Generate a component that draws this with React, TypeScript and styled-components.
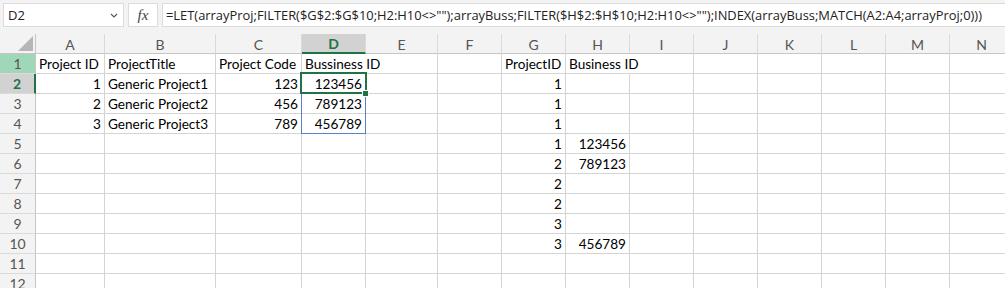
import styled, { createGlobalStyle } from "styled-components";

const GlobalStyle = createGlobalStyle`
  html, body {
    margin: 0;
    padding: 0;
    background: #ffffff;
    overflow: hidden;
  }
`;

const COLS = ["A", "B", "C", "D", "E", "F", "G", "H", "I", "J", "K", "L", "M", "N"];
const WIDTHS = [69, 111, 86, 64, 72, 64, 64, 64, 64, 64, 64, 64, 64, 64];

type Val = string | number | null;

// A..N per row, rows 1..13
const ROWS: Val[][] = [
  ["Project ID", "ProjectTitle", "Project Code", "Bussiness ID", null, null, "ProjectID", "Business ID"],
  [1, "Generic Project1", 123, 123456, null, null, 1],
  [2, "Generic Project2", 456, 789123, null, null, 1],
  [3, "Generic Project3", 789, 456789, null, null, 1],
  [null, null, null, null, null, null, 1, 123456],
  [null, null, null, null, null, null, 2, 789123],
  [null, null, null, null, null, null, 2],
  [null, null, null, null, null, null, 2],
  [null, null, null, null, null, null, 3],
  [null, null, null, null, null, null, 3, 456789],
  [],
  [],
  [],
];

const FORMULA =
  '=LET(arrayProj;FILTER($G$2:$G$10;H2:H10<>"");arrayBuss;FILTER($H$2:$H$10;H2:H10<>"");INDEX(arrayBuss;MATCH(A2:A4;arrayProj;0)))';

const Sheet = styled.div`
  width: 1005px;
  height: 288px;
  overflow: hidden;
  background: #ffffff;
  font-family: Lato, "Open Sans", sans-serif;
`;

const FormulaBar = styled.div`
  height: 34px;
  box-sizing: border-box;
  display: flex;
  align-items: flex-start;
  gap: 4px;
  padding: 3px 0 0 3px;
  background: #f3f3f3;
`;

const NameBox = styled.div`
  width: 121px;
  height: 24px;
  box-sizing: border-box;
  display: flex;
  align-items: center;
  justify-content: space-between;
  padding: 0 5px 0 4px;
  background: #ffffff;
  border: 1px solid #dcdcdc;
  font-family: "Open Sans", sans-serif;
  font-size: 13px;
  color: #222222;
`;

const FxBox = styled.div`
  width: 30px;
  height: 24px;
  box-sizing: border-box;
  display: flex;
  align-items: center;
  justify-content: center;
  background: #ffffff;
  border: 1px solid #dcdcdc;
  font-family: "Liberation Serif", serif;
  font-style: italic;
  font-size: 15px;
  color: #444444;
`;

const FormulaInput = styled.div`
  flex: 1;
  height: 24px;
  box-sizing: border-box;
  display: flex;
  align-items: center;
  padding-left: 3px;
  background: #ffffff;
  border: 1px solid #dcdcdc;
  border-right: none;
  font-family: "Open Sans", sans-serif;
  font-size: 12.9px;
  color: #222222;
  white-space: nowrap;
  overflow: hidden;
`;

const Grid = styled.div`
  position: relative;
  display: grid;
  grid-template-columns: 36px ${WIDTHS.map((w) => `${w}px`).join(" ")};
  grid-auto-rows: 20px;
  width: max-content;
`;

const Corner = styled.div`
  position: relative;
  box-sizing: border-box;
  background: #f3f3f3;
  border-right: 1px solid #c6c6c6;
  border-bottom: 1px solid #c6c6c6;

  &::after {
    content: "";
    position: absolute;
    right: 2px;
    bottom: 2px;
    width: 0;
    height: 0;
    border-left: 15px solid transparent;
    border-bottom: 15px solid #b6b6b6;
  }
`;

const ColHead = styled.div<{ $active?: boolean }>`
  box-sizing: border-box;
  display: flex;
  align-items: center;
  justify-content: center;
  background: ${({ $active }) => ($active ? "#d2d2d2" : "#f3f3f3")};
  border-right: 1px solid #dadada;
  border-bottom: ${({ $active }) => ($active ? "2px solid #217346" : "1px solid #c6c6c6")};
  font-size: 14px;
  font-weight: ${({ $active }) => ($active ? 700 : 400)};
  color: ${({ $active }) => ($active ? "#217346" : "#555555")};
  padding-top: 1px;
`;

const RowHead = styled.div<{ $active?: boolean; $hl?: boolean }>`
  box-sizing: border-box;
  display: flex;
  align-items: center;
  justify-content: center;
  background: ${({ $active, $hl }) => ($active ? "#d2d2d2" : $hl ? "#a0d7b8" : "#f3f3f3")};
  border-right: ${({ $active }) => ($active ? "2px solid #217346" : "1px solid #c6c6c6")};
  border-bottom: 1px solid #dadada;
  font-size: 14px;
  font-weight: ${({ $active }) => ($active ? 700 : 400)};
  color: ${({ $active }) => ($active ? "#217346" : "#555555")};
`;

const Cell = styled.div<{ $num?: boolean; $spill?: boolean }>`
  box-sizing: border-box;
  display: flex;
  align-items: flex-end;
  justify-content: ${({ $num }) => ($num ? "flex-end" : "flex-start")};
  padding: 0 3px 1px 3px;
  border-right: ${({ $spill }) => ($spill ? "1px solid transparent" : "1px solid #d4d4d4")};
  border-bottom: 1px solid #d4d4d4;
  font-size: 13.6px;
  color: #000000;
  white-space: nowrap;
  overflow: ${({ $spill }) => ($spill ? "visible" : "hidden")};
  position: relative;
  z-index: ${({ $spill }) => ($spill ? 1 : 0)};
`;

const SpillRange = styled.div`
  position: absolute;
  left: 301px;
  top: 39px;
  width: 65px;
  height: 61px;
  box-sizing: border-box;
  border: 1px solid #5b80c6;
  pointer-events: none;
  z-index: 2;
`;

const ActiveCell = styled.div`
  position: absolute;
  left: 300px;
  top: 38px;
  width: 67px;
  height: 22px;
  box-sizing: border-box;
  border: 2px solid #217346;
  pointer-events: none;
  z-index: 3;
`;

const FillHandle = styled.div`
  position: absolute;
  left: 362px;
  top: 56px;
  width: 7px;
  height: 7px;
  box-sizing: border-box;
  background: #217346;
  border: 1px solid #ffffff;
  z-index: 4;
`;

const Chevron = () => (
  <svg width="8" height="5" viewBox="0 0 8 5">
    <path d="M1 1 L4 4 L7 1" fill="none" stroke="#555" strokeWidth="1.1" />
  </svg>
);

const App = () => {
  return (
    <>
      <GlobalStyle />
      <Sheet>
        <FormulaBar>
          <NameBox>
            D2
            <Chevron />
          </NameBox>
          <FxBox>fx</FxBox>
          <FormulaInput>{FORMULA}</FormulaInput>
        </FormulaBar>
        <Grid>
          <Corner />
          {COLS.map((c) => (
            <ColHead key={c} $active={c === "D"}>
              {c}
            </ColHead>
          ))}
          {ROWS.map((row, r) => {
            const n = r + 1;
            return [
              <RowHead key={`h${n}`} $active={n === 2} $hl={n === 1}>
                {n}
              </RowHead>,
              ...COLS.map((c, ci) => {
                const v = row[ci] ?? null;
                const spill = n === 1 && (c === "D" || c === "H");
                return (
                  <Cell key={`${c}${n}`} $num={typeof v === "number"} $spill={spill}>
                    {v}
                  </Cell>
                );
              }),
            ];
          })}
          <SpillRange />
          <ActiveCell />
          <FillHandle />
        </Grid>
      </Sheet>
    </>
  );
};

export default App;
